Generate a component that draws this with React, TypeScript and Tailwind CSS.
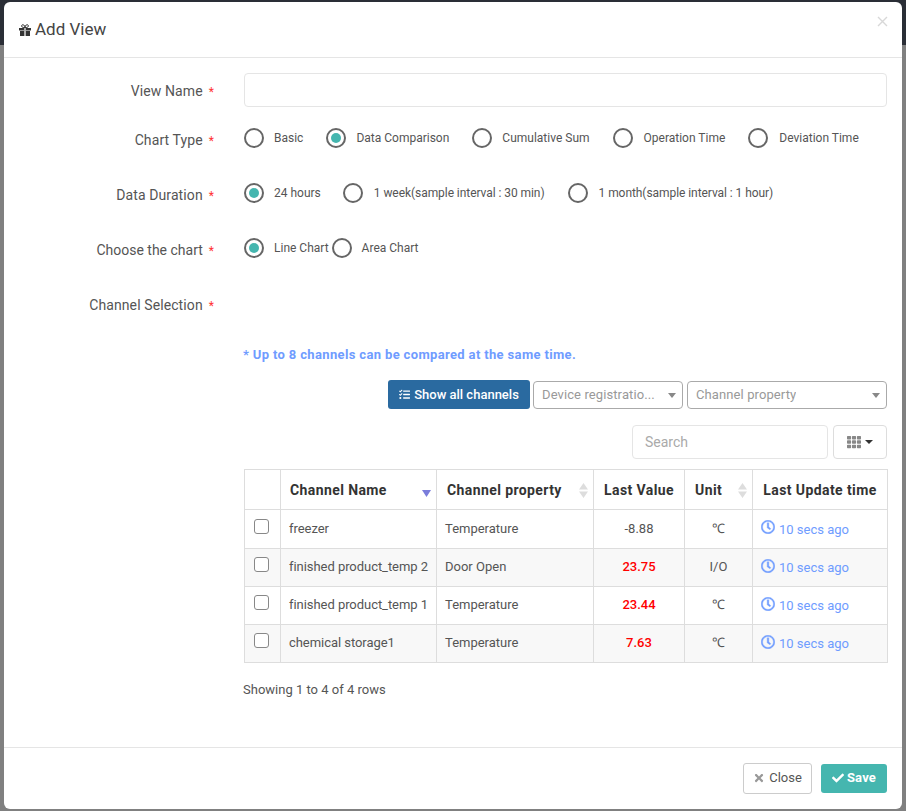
import React from "react";
import { FaTasks, FaTh, FaRegClock, FaTimes, FaCheck } from "react-icons/fa";

const font = "font-['Roboto',sans-serif]";

function Gift() {
  return (
    <svg width="12" height="12" viewBox="0 0 12 12" className="mr-[4px] translate-y-[1px]">
      <path d="M0 4h5v2.5H0zM7 4h5v2.5H7zM1 7h4v5H1zM7 7h4v5H7z" fill="#333333" />
      <path d="M5.6 4V12M6.4 4V12" stroke="#333333" strokeWidth="0.4" />
      <path d="M6 3.6C4.5 3.6 2.6 3.4 2.6 2 2.6 0.7 4 0.4 4.8 1 5.5 1.5 6 2.6 6 3.6zM6 3.6C7.5 3.6 9.4 3.4 9.4 2 9.4 0.7 8 0.4 7.2 1 6.5 1.5 6 2.6 6 3.6z" fill="none" stroke="#333333" strokeWidth="1" />
    </svg>
  );
}

function Radio({ label, checked, gap = "mr-[23px]", text = "ml-[10px]" }: { label: string; checked?: boolean; gap?: string; text?: string }) {
  return (
    <label className={`flex items-center ${gap}`}>
      <span className="flex h-5 w-5 items-center justify-center rounded-full border-2 border-[#666666]">
        {checked && <span className="h-[10px] w-[10px] rounded-full bg-[#45b6af]" />}
      </span>
      <span className={`text-xs leading-5 text-[#555555] ${text}`}>{label}</span>
    </label>
  );
}

function FormRow({ label, h, top = "pt-[7px]", track = "tracking-[0.1px]", children }: { label: string; h: string; top?: string; track?: string; children?: React.ReactNode }) {
  return (
    <div className={`flex ${h}`}>
      <div className={`w-[240px] pr-[30px] text-right text-sm leading-5 text-[#555555] ${top} ${track}`}>
        {label}
        <span className="ml-[6px] text-xs text-[#ff3333]">*</span>
      </div>
      <div className="flex-1">{children}</div>
    </div>
  );
}

function Sort({ active }: { active?: boolean }) {
  if (active) {
    return (
      <svg width="9" height="7" viewBox="0 0 9 7" className="absolute bottom-[12px] right-[5px]">
        <path d="M0 0h9L4.5 7z" fill="#7a7ddb" />
      </svg>
    );
  }
  return (
    <svg width="9" height="15" viewBox="0 0 9 15" className="absolute right-[5px] top-[13px]">
      <path d="M4.5 0L9 6.5H0z M4.5 15L0 8.5h9z" fill="#dddddd" />
    </svg>
  );
}

const rows = [
  { name: "freezer", prop: "Temperature", value: "-8.88", red: false, unit: "℃" },
  { name: "finished product_temp 2", prop: "Door Open", value: "23.75", red: true, unit: "I/O" },
  { name: "finished product_temp 1", prop: "Temperature", value: "23.44", red: true, unit: "℃" },
  { name: "chemical storage1", prop: "Temperature", value: "7.63", red: true, unit: "℃" },
];

const cell = "border border-[#dddddd]";
const th = `${cell} relative h-10 text-sm font-bold tracking-[0.4px] text-[#333333] p-0`;

function Select({ label, w }: { label: string; w: string }) {
  return (
    <div className={`flex h-[28px] ${w} items-center justify-between rounded-[4px] border border-[#aaaaaa] bg-white pl-2 pr-[6px]`}>
      <span className="truncate text-[13px] tracking-[0.1px] text-[#999999]">{label}</span>
      <span className="h-0 w-0 shrink-0 border-x-[4px] border-t-[5px] border-x-transparent border-t-[#888888]" />
    </div>
  );
}

export default function App() {
  return (
    <div className={`${font} min-h-[811px] bg-[linear-gradient(#2a2e36_0,#2a2e36_45px,#808080_45px)] px-1 pb-[2px] pt-[2px]`}>
      <div className="flex h-[807px] w-[898px] flex-col rounded-md bg-white">
        <div className="flex h-[56px] shrink-0 items-start justify-between border-b border-[#e5e5e5] pl-[15px] pr-[14px]">
          <div className="mt-[17px] flex items-center">
            <Gift />
            <span className="text-[17px] leading-5 text-[#444444]">Add View</span>
          </div>
          <svg width="11" height="11" viewBox="0 0 11 11" className="mt-[14px]">
            <path d="M1 1l9 9M10 1l-9 9" stroke="#d8d8d8" strokeWidth="1.4" />
          </svg>
        </div>

        <div className="flex-1 pr-[15px] pt-[15px]">
          <FormRow label="View Name" h="h-[50px]" top="pt-[8px]">
            <div className="h-[34px] rounded-[4px] border border-[#e5e5e5] bg-white" />
          </FormRow>
          <FormRow label="Chart Type" h="h-[55px]">
            <div className="flex pt-[5px]">
              <Radio label="Basic" />
              <Radio label="Data Comparison" checked />
              <Radio label="Cumulative Sum" />
              <Radio label="Operation Time" text="ml-[11px]" />
              <Radio label="Deviation Time" gap="" text="ml-[11px]" />
            </div>
          </FormRow>
          <FormRow label="Data Duration" h="h-[55px]">
            <div className="flex pt-[5px]">
              <Radio label="24 hours" checked gap="mr-[22px]" />
              <Radio label="1 week(sample interval : 30 min)" text="ml-[11px] tracking-[-0.06px]" />
              <Radio label="1 month(sample interval : 1 hour)" gap="" text="ml-[11px] tracking-[-0.06px]" />
            </div>
          </FormRow>
          <FormRow label="Choose the chart" h="h-[55px]" track="tracking-[0px]">
            <div className="flex pt-[5px]">
              <Radio label="Line Chart" checked gap="mr-[3px]" />
              <Radio label="Area Chart" gap="" />
            </div>
          </FormRow>
          <FormRow label="Channel Selection" h="h-[58px]" />

          <div className="ml-[240px]">
            <p className="-ml-px text-[13px] font-bold leading-[18px] tracking-[0.35px] text-[#6f9cff]">* Up to 8 channels can be compared at the same time.</p>

            <div className="mt-[16px] flex items-end justify-end">
              <button className="mr-[3px] flex h-[29px] w-[142px] items-center justify-center rounded-[3px] bg-[#2a6aa0] text-[13px] font-medium text-white">
                <FaTasks className="mr-[4px] h-[11px] w-[11px]" />
                Show all channels
              </button>
              <div className="mr-[4px]">
                <Select label="Device registratio..." w="w-[150px]" />
              </div>
              <Select label="Channel property" w="w-[200px]" />
            </div>

            <div className="mt-[16px] flex justify-end gap-[5px]">
              <div className="flex h-[34px] w-[196px] items-center rounded-[4px] border border-[#e5e5e5] px-3 text-sm text-[#aaaaaa]">Search</div>
              <div className="flex h-[34px] w-[54px] items-center justify-center rounded-[4px] border border-[#dddddd]">
                <FaTh className="h-[14px] w-[14px] text-[#888888]" />
                <span className="ml-[4px] h-0 w-0 border-x-[4px] border-t-[4px] border-x-transparent border-t-[#333333]" />
              </div>
            </div>

            <table className="mt-[10px] w-[643px] table-fixed border-collapse">
              <colgroup>
                <col className="w-[36px]" />
                <col className="w-[156px]" />
                <col className="w-[157px]" />
                <col className="w-[91px]" />
                <col className="w-[68px]" />
                <col className="w-[135px]" />
              </colgroup>
              <thead>
                <tr>
                  <th className={th} />
                  <th className={`${th} pl-[9px] text-left`}>Channel Name<Sort active /></th>
                  <th className={`${th} pl-[10px] text-left`}>Channel property<Sort /></th>
                  <th className={th}>Last Value</th>
                  <th className={`${th} pl-[10px] text-left`}>Unit<Sort /></th>
                  <th className={th}>Last Update time</th>
                </tr>
              </thead>
              <tbody>
                {rows.map((r, i) => (
                  <tr key={r.name} className={i % 2 === 1 ? "h-[38px] bg-[#f8f8f8]" : i === 0 ? "h-[39px]" : "h-[38px]"}>
                    <td className={`${cell} pr-[2px] text-center`}>
                      <span className={`inline-block h-[15px] w-[15px] rounded-[3px] border border-[#888888] bg-white align-middle ${i === 0 ? "translate-y-[-3px]" : "translate-y-[-4px]"}`} />
                    </td>
                    <td className={`${cell} pl-[8px] text-[13px] tracking-[-0.05px] text-[#555555]`}>
                      <span className={i === 0 ? "" : "relative -top-px"}>{r.name}</span>
                    </td>
                    <td className={`${cell} pl-[8px] text-[13px] text-[#555555]`}>
                      <span className={i === 0 ? "" : "relative -top-px"}>{r.prop}</span>
                    </td>
                    <td className={`${cell} text-center text-[13px] ${r.red ? "font-medium text-[#ff0000]" : "text-[#555555]"}`}>
                      <span className={i === 0 ? "" : "relative -top-px"}>{r.value}</span>
                    </td>
                    <td className={`${cell} text-center text-[13px] text-[#555555]`}>
                      <span className={i === 0 ? "" : "relative -top-px"}>{r.unit}</span>
                    </td>
                    <td className={`${cell} pl-[8px] text-[13px] text-[#6f9cff]`}>
                      <span className="flex items-center">
                        <FaRegClock className="mr-[4px] h-[14px] w-[14px] -translate-y-[2px] stroke-[16]" />
                        <span className={i === 0 ? "translate-y-[1px]" : ""}>10 secs ago</span>
                      </span>
                    </td>
                  </tr>
                ))}
              </tbody>
            </table>

            <p className="-ml-px mt-[18px] text-[13px] leading-[18px] text-[#555555]">Showing 1 to 4 of 4 rows</p>
          </div>
        </div>

        <div className="flex h-[62px] shrink-0 items-start justify-end gap-[9px] border-t border-[#e5e5e5] pr-[15px] pt-[15px]">
          <button className="flex h-[31px] w-[69px] items-center justify-center rounded-[3px] border border-[#cccccc] bg-white pb-px text-[13px] text-[#555555]">
            <FaTimes className="mr-[4px] h-[12px] w-[12px] text-[#999999]" />
            Close
          </button>
          <button className="flex h-[29px] w-[66px] translate-y-[1px] items-center justify-center rounded-[3px] bg-[#45b6af] pb-px text-[13px] font-bold tracking-[0.2px] text-white">
            <FaCheck className="mr-[3px] h-[12px] w-[12px]" />
            Save
          </button>
        </div>
      </div>
    </div>
  );
}
